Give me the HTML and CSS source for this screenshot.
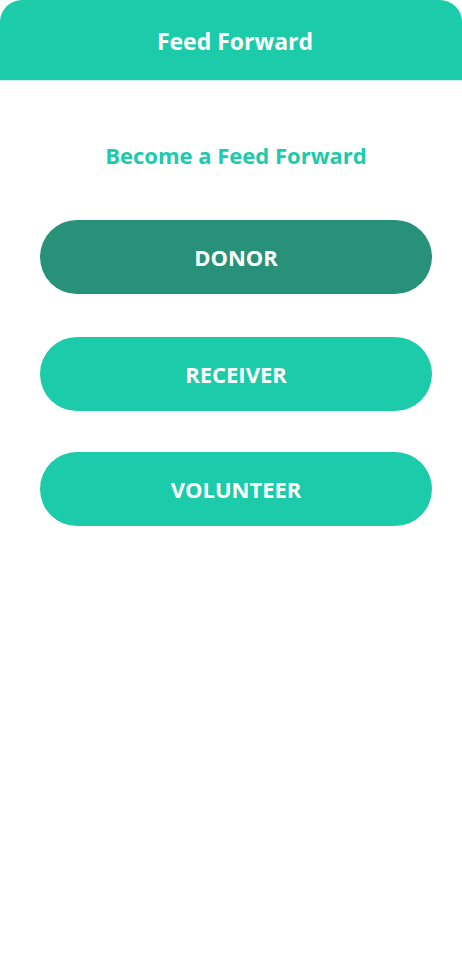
FILE: index.html
```html
<!DOCTYPE html>
<html lang="en">
<head>
<meta charset="utf-8">
<title>Feed Forward</title>
<link rel="stylesheet" href="styles.css">
</head>
<body>
<div class="app">
  <header class="topbar"><h1 class="topbar-title">Feed Forward</h1></header>
  <main class="content">
    <h2 class="subtitle">Become a Feed Forward</h2>
    <div class="roles">
      <button class="role role-active">DONOR</button>
      <button class="role role-second">RECEIVER</button>
      <button class="role role-third">VOLUNTEER</button>
    </div>
  </main>
</div>
</body>
</html>
```
FILE: styles.css
```css
html, body { margin: 0; padding: 0; background: #ffffff; }
body { font-family: "Open Sans", "Noto Sans", sans-serif; }
.app { width: 462px; min-height: 975px; }
.topbar {
  height: 81px;
  background: #1ccbaa;
  border-radius: 22px 22px 0 0;
  display: flex;
  align-items: center;
  justify-content: center;
  border-bottom: 1px solid #c9f1e8;
  box-sizing: border-box;
}
.topbar-title {
  margin: 0;
  color: #ffffff;
  font-size: 23px;
  font-weight: 700;
  padding-top: 2px;
  padding-left: 8px;
}
.content { padding: 0 30px 0 40px; }
.subtitle {
  margin: 60px 0 0 0;
  text-align: center;
  color: #1ccbaa;
  font-size: 22px;
  font-weight: 700;
  line-height: 28px;
}
.roles {
  margin-top: 51px;
  display: flex;
  flex-direction: column;
}
.role {
  width: 392px;
  height: 74px;
  border: none;
  border-radius: 37px;
  background: #1ccbaa;
  color: #ffffff;
  font-family: "Open Sans", "Noto Sans", sans-serif;
  font-size: 22px;
  font-weight: 700;
  padding: 0;
}
.role-active { background: #27917a; }
.role-second { margin-top: 43px; }
.role-third { margin-top: 41px; }
```
